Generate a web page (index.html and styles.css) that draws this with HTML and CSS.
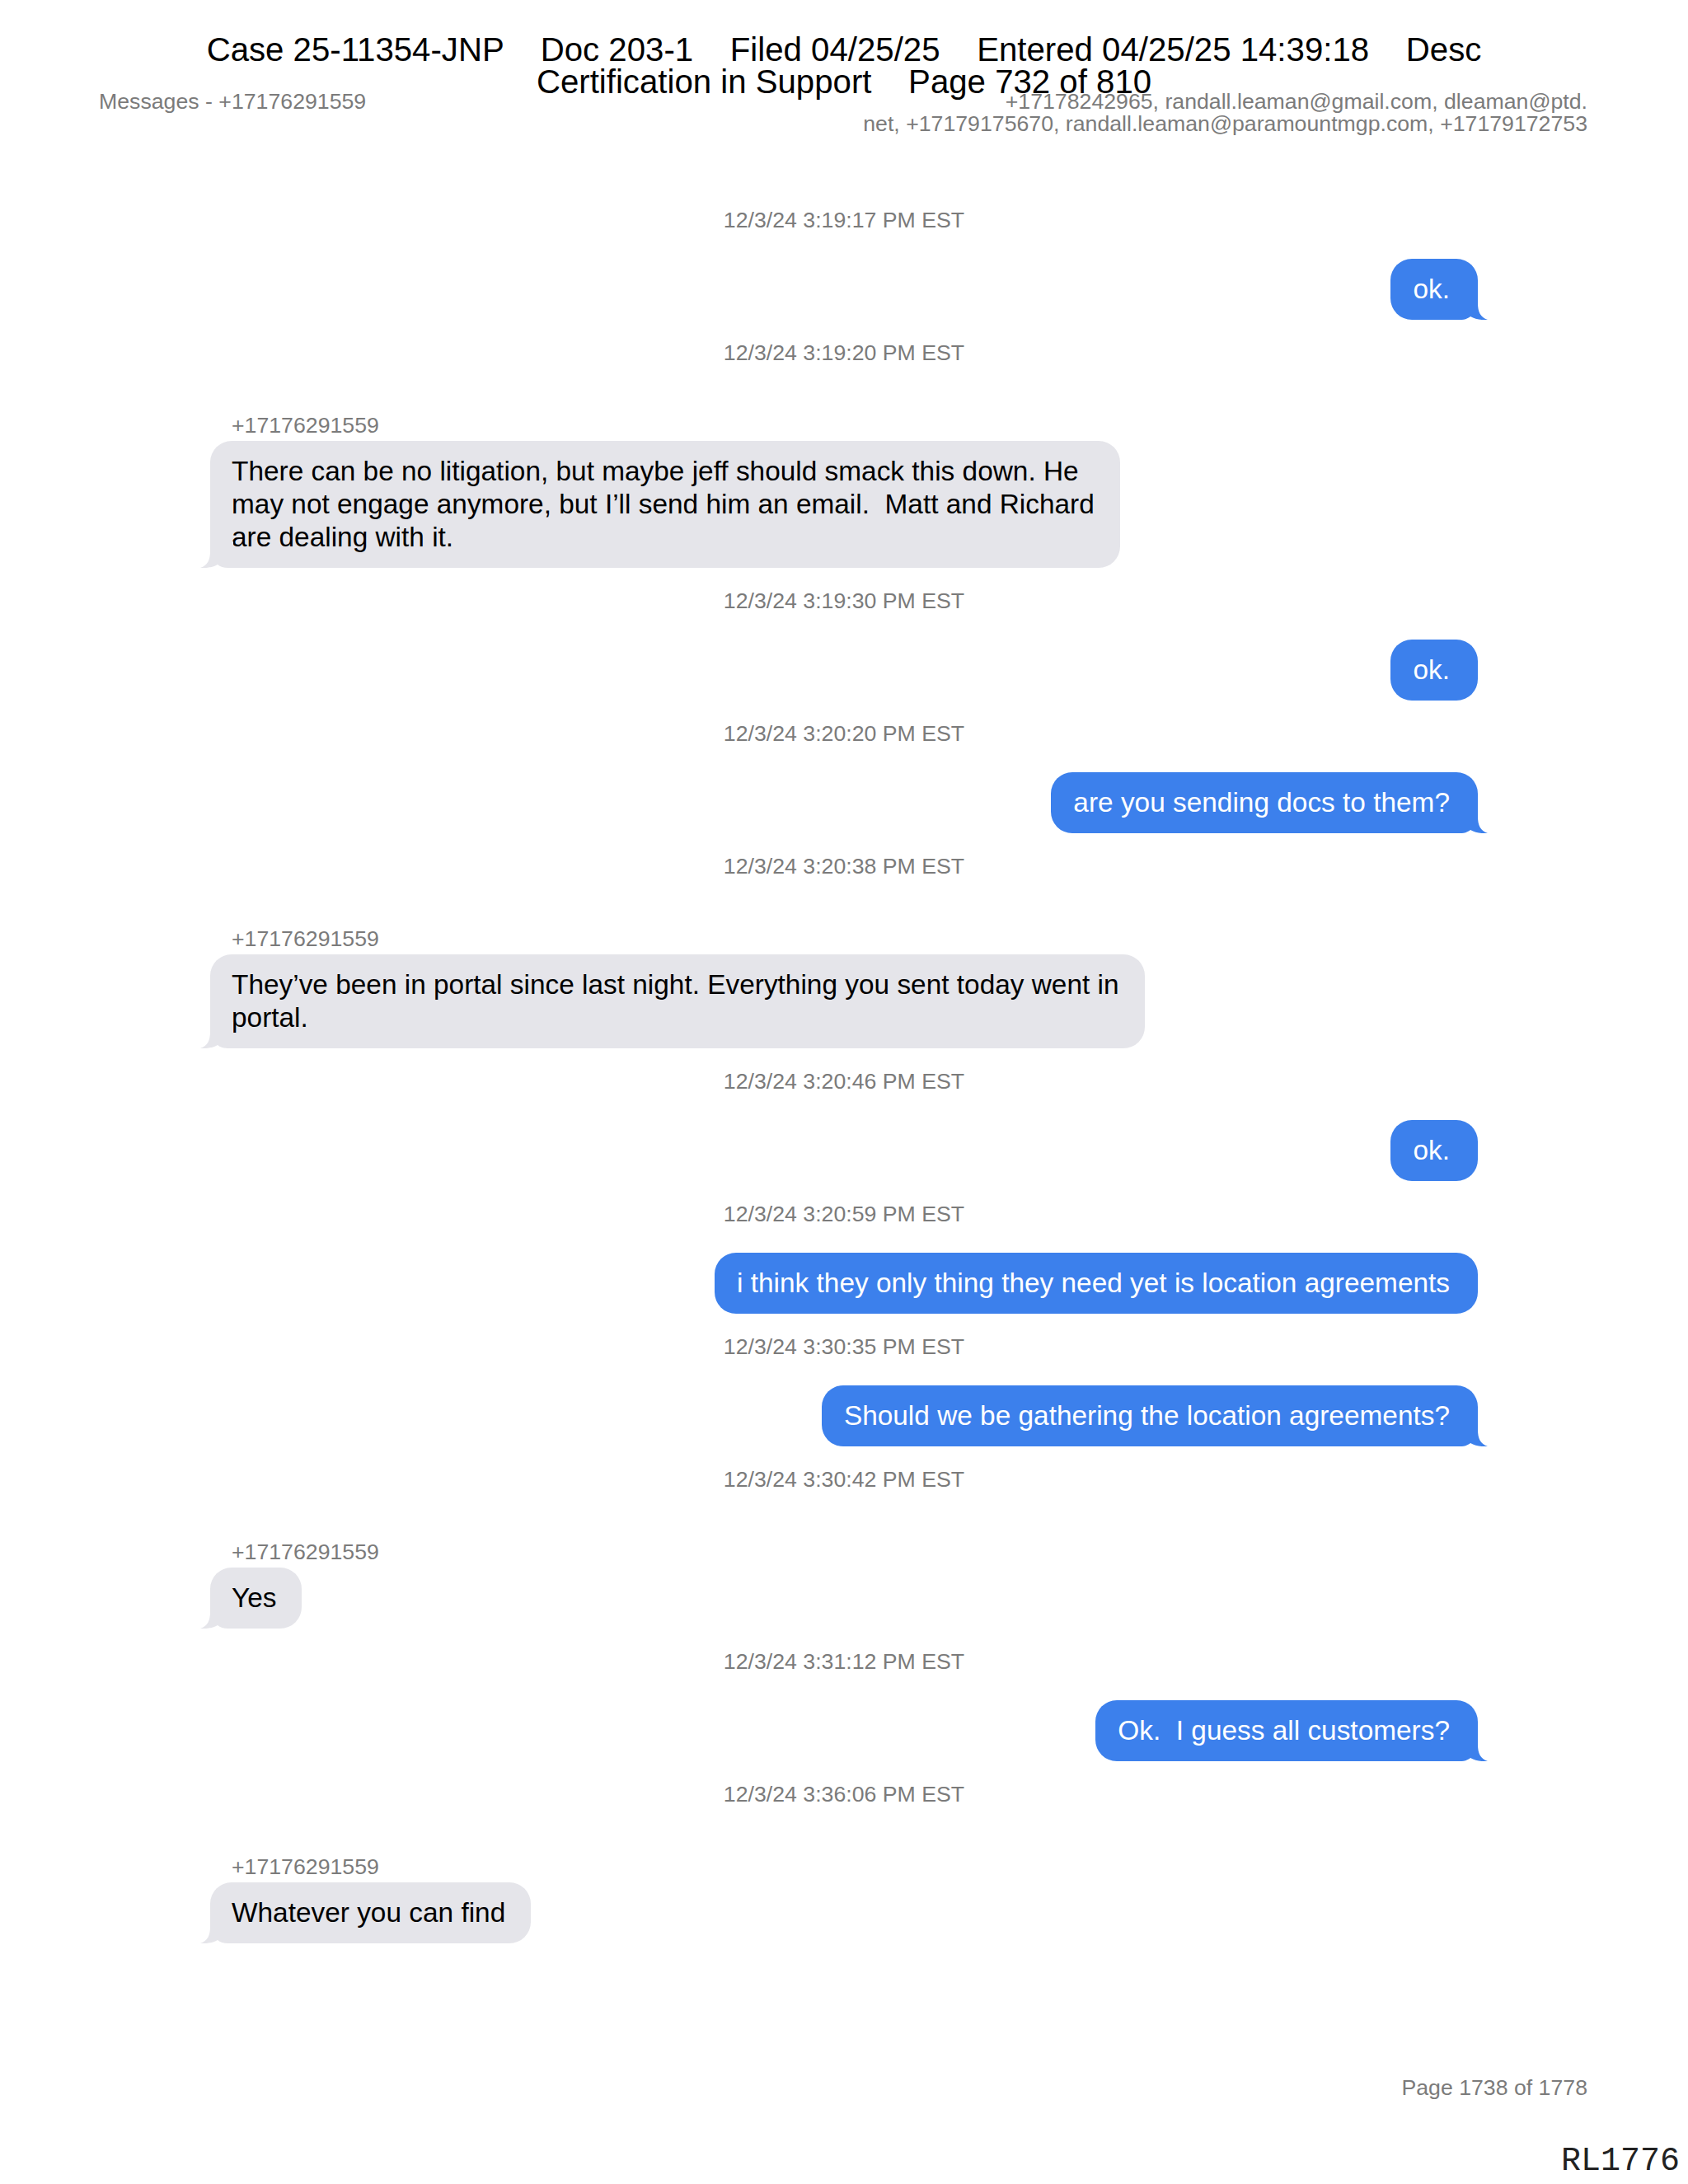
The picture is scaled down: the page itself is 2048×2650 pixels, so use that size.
FILE: index.html
```html
<!DOCTYPE html>
<html lang="en">
<head>
<meta charset="utf-8">
<title>Messages - +17176291559</title>
<link rel="stylesheet" href="styles.css">
</head>
<body>
<div class="page">
  <div class="stamp">Case 25-11354-JNP    Doc 203-1    Filed 04/25/25    Entered 04/25/25 14:39:18    Desc
Certification in Support    Page 732 of 810</div>

  <header class="doc-head">
    <div class="head-left">Messages - +17176291559</div>
    <div class="head-right">+17178242965, randall.leaman@gmail.com, dleaman@ptd.<br>net, +17179175670, randall.leaman@paramountmgp.com, +17179172753</div>
  </header>

  <main class="chat">
    <div class="ts">12/3/24 3:19:17 PM EST</div>
    <div class="row sent"><div class="bubble has-tail">ok.<svg class="tail" viewBox="0 0 40 32"><path d="M28 0 L28 12 C28 22 31 29 40 32 C33 32.6 25 31.5 19 28 C16 30.5 12 32 6 32 L0 32 L0 0 Z"/></svg></div></div>

    <div class="ts">12/3/24 3:19:20 PM EST</div>
    <div class="row recv"><div class="sender">+17176291559</div><div class="bubble has-tail">There can be no litigation, but maybe jeff should smack this down. He
may not engage anymore, but I’ll send him an email.  Matt and Richard
are dealing with it.<svg class="tail" viewBox="0 0 40 32"><path d="M28 0 L28 12 C28 22 31 29 40 32 C33 32.6 25 31.5 19 28 C16 30.5 12 32 6 32 L0 32 L0 0 Z"/></svg></div></div>

    <div class="ts">12/3/24 3:19:30 PM EST</div>
    <div class="row sent"><div class="bubble">ok.</div></div>

    <div class="ts">12/3/24 3:20:20 PM EST</div>
    <div class="row sent"><div class="bubble has-tail">are you sending docs to them?<svg class="tail" viewBox="0 0 40 32"><path d="M28 0 L28 12 C28 22 31 29 40 32 C33 32.6 25 31.5 19 28 C16 30.5 12 32 6 32 L0 32 L0 0 Z"/></svg></div></div>

    <div class="ts">12/3/24 3:20:38 PM EST</div>
    <div class="row recv"><div class="sender">+17176291559</div><div class="bubble has-tail">They’ve been in portal since last night. Everything you sent today went in
portal.<svg class="tail" viewBox="0 0 40 32"><path d="M28 0 L28 12 C28 22 31 29 40 32 C33 32.6 25 31.5 19 28 C16 30.5 12 32 6 32 L0 32 L0 0 Z"/></svg></div></div>

    <div class="ts">12/3/24 3:20:46 PM EST</div>
    <div class="row sent"><div class="bubble">ok.</div></div>

    <div class="ts">12/3/24 3:20:59 PM EST</div>
    <div class="row sent"><div class="bubble">i think they only thing they need yet is location agreements</div></div>

    <div class="ts">12/3/24 3:30:35 PM EST</div>
    <div class="row sent"><div class="bubble has-tail">Should we be gathering the location agreements?<svg class="tail" viewBox="0 0 40 32"><path d="M28 0 L28 12 C28 22 31 29 40 32 C33 32.6 25 31.5 19 28 C16 30.5 12 32 6 32 L0 32 L0 0 Z"/></svg></div></div>

    <div class="ts">12/3/24 3:30:42 PM EST</div>
    <div class="row recv"><div class="sender">+17176291559</div><div class="bubble has-tail">Yes<svg class="tail" viewBox="0 0 40 32"><path d="M28 0 L28 12 C28 22 31 29 40 32 C33 32.6 25 31.5 19 28 C16 30.5 12 32 6 32 L0 32 L0 0 Z"/></svg></div></div>

    <div class="ts">12/3/24 3:31:12 PM EST</div>
    <div class="row sent"><div class="bubble has-tail">Ok.  I guess all customers?<svg class="tail" viewBox="0 0 40 32"><path d="M28 0 L28 12 C28 22 31 29 40 32 C33 32.6 25 31.5 19 28 C16 30.5 12 32 6 32 L0 32 L0 0 Z"/></svg></div></div>

    <div class="ts">12/3/24 3:36:06 PM EST</div>
    <div class="row recv"><div class="sender">+17176291559</div><div class="bubble has-tail">Whatever you can find<svg class="tail" viewBox="0 0 40 32"><path d="M28 0 L28 12 C28 22 31 29 40 32 C33 32.6 25 31.5 19 28 C16 30.5 12 32 6 32 L0 32 L0 0 Z"/></svg></div></div>
  </main>

  <footer class="page-foot">Page 1738 of 1778</footer>
  <div class="bates">RL1776</div>
</div>
</body>
</html>
```

FILE: styles.css
```css
* { box-sizing: border-box; }

html, body {
  margin: 0;
  padding: 0;
  background: #ffffff;
}

body {
  font-family: "Liberation Sans", Arial, sans-serif;
  color: #000;
}

.page {
  position: relative;
  width: 2048px;
  min-height: 2650px;
  display: flex;
  flex-direction: column;
}

/* court filing stamp, lies over the page header */
.stamp {
  position: absolute;
  top: 41px;
  left: 0;
  right: 0;
  text-align: center;
  white-space: pre;
  font-size: 40.2px;
  line-height: 39px;
  color: #000;
  z-index: 2;
}

.doc-head {
  display: flex;
  justify-content: space-between;
  align-items: flex-start;
  padding: 110px 122px 0 120px;
  font-size: 26.7px;
  line-height: 27px;
  color: #7b7b7b;
}

.head-right {
  text-align: right;
}

.chat {
  display: flex;
  flex-direction: column;
  margin: 88px 255px 0 255px;
}

.ts {
  text-align: center;
  font-size: 26.7px;
  line-height: 30px;
  color: #7b7b7b;
  margin-top: 25px;
}

.ts:first-child {
  margin-top: 0;
}

.row {
  display: flex;
  flex-direction: column;
}

.row.sent {
  align-items: flex-end;
  margin-top: 32px;
}

.row.recv {
  align-items: flex-start;
  margin-top: 58px;
}

.sender {
  font-size: 26.7px;
  line-height: 30px;
  color: #7b7b7b;
  margin-left: 26px;
  margin-bottom: 4px;
}

.bubble {
  position: relative;
  font-size: 33.4px;
  line-height: 40px;
  white-space: pre-wrap;
  border-radius: 26px;
  max-width: 1160px;
}

.sent .bubble {
  background: #3c80ec;
  color: #ffffff;
  padding: 17px 34px 17px 27px;
}

.recv .bubble {
  background: #e5e5ea;
  color: #000000;
  padding: 17px 31px 17px 26px;
}

.tail {
  position: absolute;
  bottom: 0;
  width: 40px;
  height: 32px;
  display: block;
}

.sent .tail {
  right: -12px;
}

.sent .tail path {
  fill: #3c80ec;
}

.recv .tail {
  left: -12px;
  transform: scaleX(-1);
}

.recv .tail path {
  fill: #e5e5ea;
}

.page-foot {
  margin-top: 160px;
  padding-right: 122px;
  text-align: right;
  font-size: 26.7px;
  line-height: 30px;
  color: #7b7b7b;
}

.bates {
  margin-top: 55px;
  padding-right: 10px;
  text-align: right;
  font-family: "Liberation Mono", "Courier New", monospace;
  font-size: 40px;
  line-height: 40px;
  color: #222;
}
```
